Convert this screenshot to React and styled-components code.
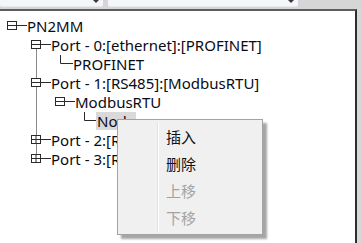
import React from "react";
import styled, { createGlobalStyle } from "styled-components";

const GlobalStyle = createGlobalStyle`
  html, body { margin: 0; padding: 0; background: #d8d8d8; overflow: hidden; }
  body { font-family: "Noto Sans", "Noto Sans CJK SC", sans-serif; }
`;

const Screen = styled.div`
  position: relative;
  width: 361px;
  height: 243px;
  overflow: hidden;
  background: #d8d8d8;
`;

const TopBar = styled.div`
  display: flex;
  gap: 5px;
  height: 9px;
  background: #d6d6d6;
`;

const Combo = styled.div`
  position: relative;
  width: ${(p) => p.$w}px;
  height: 7px;
  background: #f4f6f9;
  border-bottom: 1px solid #e6e9ee;
  border-radius: 0 0 2px 2px;
  display: flex;
  justify-content: flex-end;
  align-items: flex-start;
  padding-right: 2px;
  box-sizing: border-box;
`;

const Arrow = styled.svg`
  display: block;
  margin-top: -1px;
`;

const TreePanel = styled.div`
  width: 357px;
  height: 240px;
  background: #ffffff;
  border-top: 2px solid #5e5e5e;
  border-right: 2px solid #2e2e2e;
  padding-top: 5px;
  box-sizing: border-box;
`;

const Row = styled.div`
  display: flex;
  align-items: center;
  height: 19px;
`;

const Label = styled.span`
  font-size: 15px;
  line-height: 18px;
  color: #0a0a14;
  white-space: nowrap;
  padding: 0 1px;
  margin-left: -1px;
  background: ${(p) => (p.$selected ? "#d9d9d9" : "transparent")};
`;

const Menu = styled.div`
  position: absolute;
  left: 117px;
  top: 119px;
  width: 146px;
  height: 116px;
  box-sizing: border-box;
  background: #f0f0f0;
  border: 1px solid #a3a3a3;
  box-shadow: 4px 4px 2px rgba(0, 0, 0, 0.35);
  padding: 3px 0 0 0;
  display: flex;
  flex-direction: column;
`;

const Gutter = styled.div`
  position: absolute;
  left: 39px;
  top: 2px;
  bottom: 2px;
  width: 2px;
  border-left: 1px solid #e2e2e2;
  border-right: 1px solid #ffffff;
  box-sizing: border-box;
`;

const MenuItem = styled.div`
  height: 27px;
  display: flex;
  align-items: center;
  padding-left: 48px;
  font-size: 15px;
  font-family: "Noto Sans CJK SC", "Noto Sans", sans-serif;
  color: ${(p) => (p.$disabled ? "#a3a3a3" : "#111111")};
`;

const LINE = "#2a2a2a";
const GUIDE = "#8a8a8a";

function Lines({ level, kind, guide }) {
  // kind: "minus" | "plus" | "leaf"
  const boxLeft = 7 + level * 24;
  const width = boxLeft + (kind === "leaf" ? 18 : 20);
  const cy = 9.5;
  const els = [];
  const gx = 36.5;
  if (guide === "below") {
    els.push(<line key="g" x1={gx} y1={cy + 4} x2={gx} y2={19} stroke={GUIDE} />);
  } else if (guide === "full") {
    els.push(<line key="g" x1={gx} y1={0} x2={gx} y2={19} stroke={GUIDE} />);
  } else if (guide === "around") {
    els.push(<line key="g1" x1={gx} y1={0} x2={gx} y2={cy - 4} stroke={GUIDE} />);
    els.push(<line key="g2" x1={gx} y1={cy + 4} x2={gx} y2={19} stroke={GUIDE} />);
  } else if (guide === "above") {
    els.push(<line key="g" x1={gx} y1={0} x2={gx} y2={cy - 4} stroke={GUIDE} />);
  }
  if (kind === "leaf") {
    const x = boxLeft + 5.5;
    els.push(
      <path key="l" d={`M${x} 1 V${cy} H${width}`} fill="none" stroke={LINE} />
    );
  } else {
    const x0 = boxLeft + 0.5;
    const x1 = boxLeft + 9.5;
    els.push(
      <rect key="b" x={x0} y={cy - 4} width={9} height={8} fill="none" stroke={LINE} />
    );
    els.push(<line key="m" x1={x0} y1={cy} x2={width} y2={cy} stroke={LINE} />);
    if (kind === "plus") {
      els.push(
        <line key="p" x1={boxLeft + 5} y1={cy - 4} x2={boxLeft + 5} y2={cy + 4} stroke={LINE} />
      );
    }
  }
  return (
    <svg width={width} height={19} style={{ flex: "none", display: "block" }}>
      {els}
    </svg>
  );
}

const rows = [
  { level: 0, kind: "minus", text: "PN2MM" },
  { level: 1, kind: "minus", text: "Port - 0:[ethernet]:[PROFINET]", guide: "below" },
  { level: 2, kind: "leaf", text: "PROFINET", guide: "full" },
  { level: 1, kind: "minus", text: "Port - 1:[RS485]:[ModbusRTU]", guide: "around" },
  { level: 2, kind: "minus", text: "ModbusRTU", guide: "full" },
  { level: 3, kind: "leaf", text: "Node", guide: "full", selected: true },
  { level: 1, kind: "plus", text: "Port - 2:[RS485]:[ModbusRTU]", guide: "around" },
  { level: 1, kind: "plus", text: "Port - 3:[RS485]:[ModbusRTU]", guide: "above" },
];

const menuItems = [
  { text: "插入" },
  { text: "删除" },
  { text: "上移", disabled: true },
  { text: "下移", disabled: true },
];

function DropArrow() {
  return (
    <Arrow width="10" height="5" viewBox="0 0 10 5">
      <path d="M1 0 H9 L5 4 Z" fill="#3a3a3a" />
    </Arrow>
  );
}

export default function App() {
  return (
    <Screen>
      <GlobalStyle />
      <TopBar>
        <Combo $w={103}>
          <DropArrow />
        </Combo>
        <Combo $w={190}>
          <DropArrow />
        </Combo>
      </TopBar>
      <TreePanel>
        {rows.map((r, i) => (
          <Row key={i}>
            <Lines level={r.level} kind={r.kind} guide={r.guide} />
            <Label $selected={r.selected}>{r.text}</Label>
          </Row>
        ))}
      </TreePanel>
      <Menu>
        <Gutter />
        {menuItems.map((m) => (
          <MenuItem key={m.text} $disabled={m.disabled}>
            {m.text}
          </MenuItem>
        ))}
      </Menu>
    </Screen>
  );
}
